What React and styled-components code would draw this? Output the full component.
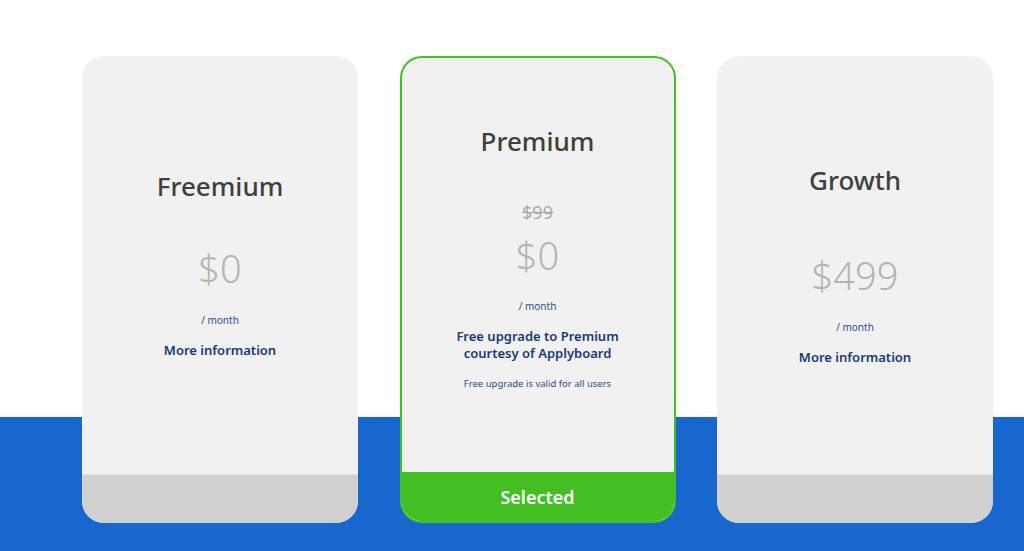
import React from "react";
import styled, { createGlobalStyle } from "styled-components";

const GlobalStyle = createGlobalStyle`
  html, body {
    margin: 0;
    padding: 0;
    background: #ffffff;
  }
  body {
    font-family: "Noto Sans", "Open Sans", sans-serif;
  }
`;

const Section = styled.section`
  height: 551px;
  background: linear-gradient(to bottom, #ffffff 0, #ffffff 417px, #1867cf 417px, #1867cf 100%);
  box-sizing: border-box;
  padding: 56px 0 0 82px;
  overflow: hidden;
`;

const Row = styled.div`
  display: flex;
  gap: 41.5px;
`;

const Card = styled.div`
  width: 276px;
  height: 467px;
  box-sizing: border-box;
  border-radius: 22px;
  background: #f1f1f1;
  border: ${(p) => (p.$selected ? "2px solid #43bf24" : "none")};
  overflow: hidden;
  display: flex;
  flex-direction: column;
`;

const Body = styled.div`
  flex: 1;
  display: flex;
  flex-direction: column;
  align-items: center;
  justify-content: center;
  text-align: center;
  padding-bottom: ${(p) => p.$pad || 0}px;
`;

const Title = styled.h2`
  margin: 0;
  font-size: 26px;
  line-height: 30px;
  font-weight: 500;
  color: #3f3f3f;
`;

const Strike = styled.div`
  margin-top: 45px;
  font-size: 18px;
  line-height: 22px;
  color: #a9a9a9;
  text-decoration: line-through;
`;

const Price = styled.div`
  margin-top: ${(p) => p.$top}px;
  font-size: 38px;
  line-height: 44px;
  font-weight: 300;
  color: #b5b5b5;
`;

const Period = styled.div`
  margin-top: ${(p) => p.$top || 23}px;
  font-size: 10px;
  line-height: 14px;
  color: #2d4f8e;
`;

const MoreLink = styled.a`
  margin-top: 14px;
  font-size: 13px;
  line-height: 18px;
  font-weight: 600;
  color: #163a7c;
  cursor: pointer;
`;

const Headline = styled.div`
  margin-top: 15px;
  font-size: 13px;
  line-height: 17px;
  font-weight: 600;
  color: #163a7c;
`;

const Note = styled.div`
  margin-top: 15px;
  font-size: 9.5px;
  line-height: 14px;
  color: #2d4f8e;
`;

const Footer = styled.div`
  height: 49px;
  flex-shrink: 0;
  display: flex;
  align-items: center;
  justify-content: center;
  background: ${(p) => (p.$selected ? "#43bf24" : "#d1d1d1")};
  border-top: ${(p) => (p.$selected ? "none" : "1px solid #e3e3e3")};
  box-sizing: border-box;
  color: #ffffff;
  font-size: 18px;
  font-weight: 600;
`;

export default function App() {
  return (
    <>
      <GlobalStyle />
      <Section>
        <Row>
          <Card>
            <Body>
              <Title>Freemium</Title>
              <Price $top={45}>$0</Price>
              <Period>/ month</Period>
              <MoreLink>More information</MoreLink>
            </Body>
            <Footer />
          </Card>

          <Card $selected>
            <Body $pad={14}>
              <Title>Premium</Title>
              <Strike>$99</Strike>
              <Price $top={10}>$0</Price>
              <Period $top={22}>/ month</Period>
              <Headline>
                Free upgrade to Premium
                <br />
                courtesy of Applyboard
              </Headline>
              <Note>Free upgrade is valid for all users</Note>
            </Body>
            <Footer $selected>Selected</Footer>
          </Card>

          <Card>
            <Body>
              <Title>Growth</Title>
              <Price $top={58}>$499</Price>
              <Period>/ month</Period>
              <MoreLink>More information</MoreLink>
            </Body>
            <Footer />
          </Card>
        </Row>
      </Section>
    </>
  );
}
